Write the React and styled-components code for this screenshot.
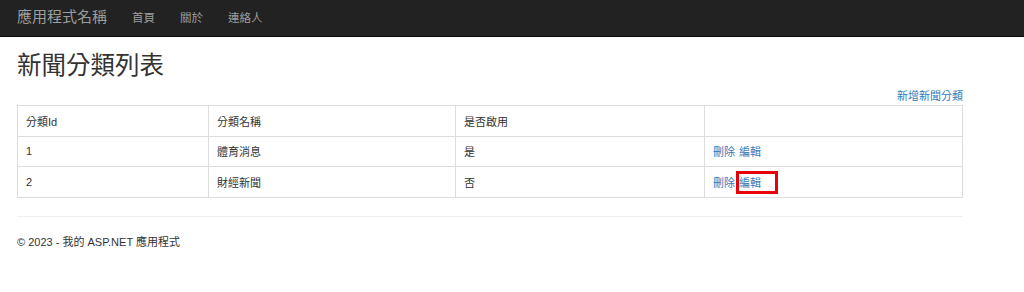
import React from 'react';
import styled, { createGlobalStyle } from 'styled-components';

const Global = createGlobalStyle`
  html, body { margin:0; padding:0; background:#fff; }
  body {
    font-family: "Liberation Sans", "Noto Sans CJK TC", sans-serif;
    color:#333;
  }
`;

const Navbar = styled.nav`
  height:37px;
  background:#222;
  border-bottom:1px solid #080808;
  box-sizing:border-box;
  display:flex;
  align-items:center;
  padding-left:17px;
`;

const Brand = styled.a`
  font-size:15px;
  color:#9d9d9d;
  text-decoration:none;
  margin-right:25px;
  line-height:1;
  margin-top:-4px;
`;

const NavLink = styled.a`
  font-size:11.5px;
  color:#9d9d9d;
  text-decoration:none;
  margin-right:25px;
  margin-top:-2px;
`;

const Container = styled.div`
  width:946px;
  margin-left:17px;
`;

const Title = styled.h2`
  font-size:24.5px;
  font-weight:400;
  line-height:26px;
  margin:16px 0 0;
  color:#333;
`;

const Actions = styled.div`
  display:flex;
  justify-content:flex-end;
  margin-top:10px;
  font-size:11px;
  line-height:15px;
`;

const Link = styled.a`
  color:#337ab7;
  text-decoration:none;
  position:relative;
  margin-right:${p => p.$gap || 0}px;
`;

const Table = styled.table`
  width:100%;
  border-collapse:collapse;
  margin-top:1px;
  font-size:11px;
  table-layout:fixed;
`;

const Cell = styled.td`
  border:1px solid #ddd;
  height:30.5px;
  padding:0 8px;
  box-sizing:border-box;
  text-align:left;
  font-weight:400;
  color:#333;
  vertical-align:middle;
`;

const Mark = styled.span`
  position:absolute;
  left:-3px;
  top:-6px;
  width:42px;
  height:23px;
  border:3px solid #e8000b;
  box-sizing:border-box;
`;

const Rule = styled.hr`
  border:0;
  border-top:1px solid #eee;
  margin:18px 0 0;
`;

const Footer = styled.footer`
  font-size:11px;
  line-height:15px;
  margin-top:18px;
`;

const rows = [
  { id: 1, name: '體育消息', on: '是' },
  { id: 2, name: '財經新聞', on: '否', marked: true },
];

export default function App() {
  return (
    <>
      <Global />
      <Navbar>
        <Brand href="#">應用程式名稱</Brand>
        <NavLink href="#">首頁</NavLink>
        <NavLink href="#">關於</NavLink>
        <NavLink href="#">連絡人</NavLink>
      </Navbar>
      <Container>
        <Title>新聞分類列表</Title>
        <Actions>
          <Link href="#">新增新聞分類</Link>
        </Actions>
        <Table>
          <colgroup>
            <col style={{ width: 191 }} />
            <col style={{ width: 247 }} />
            <col style={{ width: 249 }} />
            <col />
          </colgroup>
          <thead>
            <tr>
              <Cell as="th">分類Id</Cell>
              <Cell as="th">分類名稱</Cell>
              <Cell as="th">是否啟用</Cell>
              <Cell as="th"></Cell>
            </tr>
          </thead>
          <tbody>
            {rows.map(r => (
              <tr key={r.id}>
                <Cell>{r.id}</Cell>
                <Cell>{r.name}</Cell>
                <Cell>{r.on}</Cell>
                <Cell>
                  <Link href="#" $gap={4}>刪除</Link>
                  <Link href="#">
                    編輯
                    {r.marked && <Mark />}
                  </Link>
                </Cell>
              </tr>
            ))}
          </tbody>
        </Table>
        <Rule />
        <Footer>© 2023 - 我的 ASP.NET 應用程式</Footer>
      </Container>
    </>
  );
}
